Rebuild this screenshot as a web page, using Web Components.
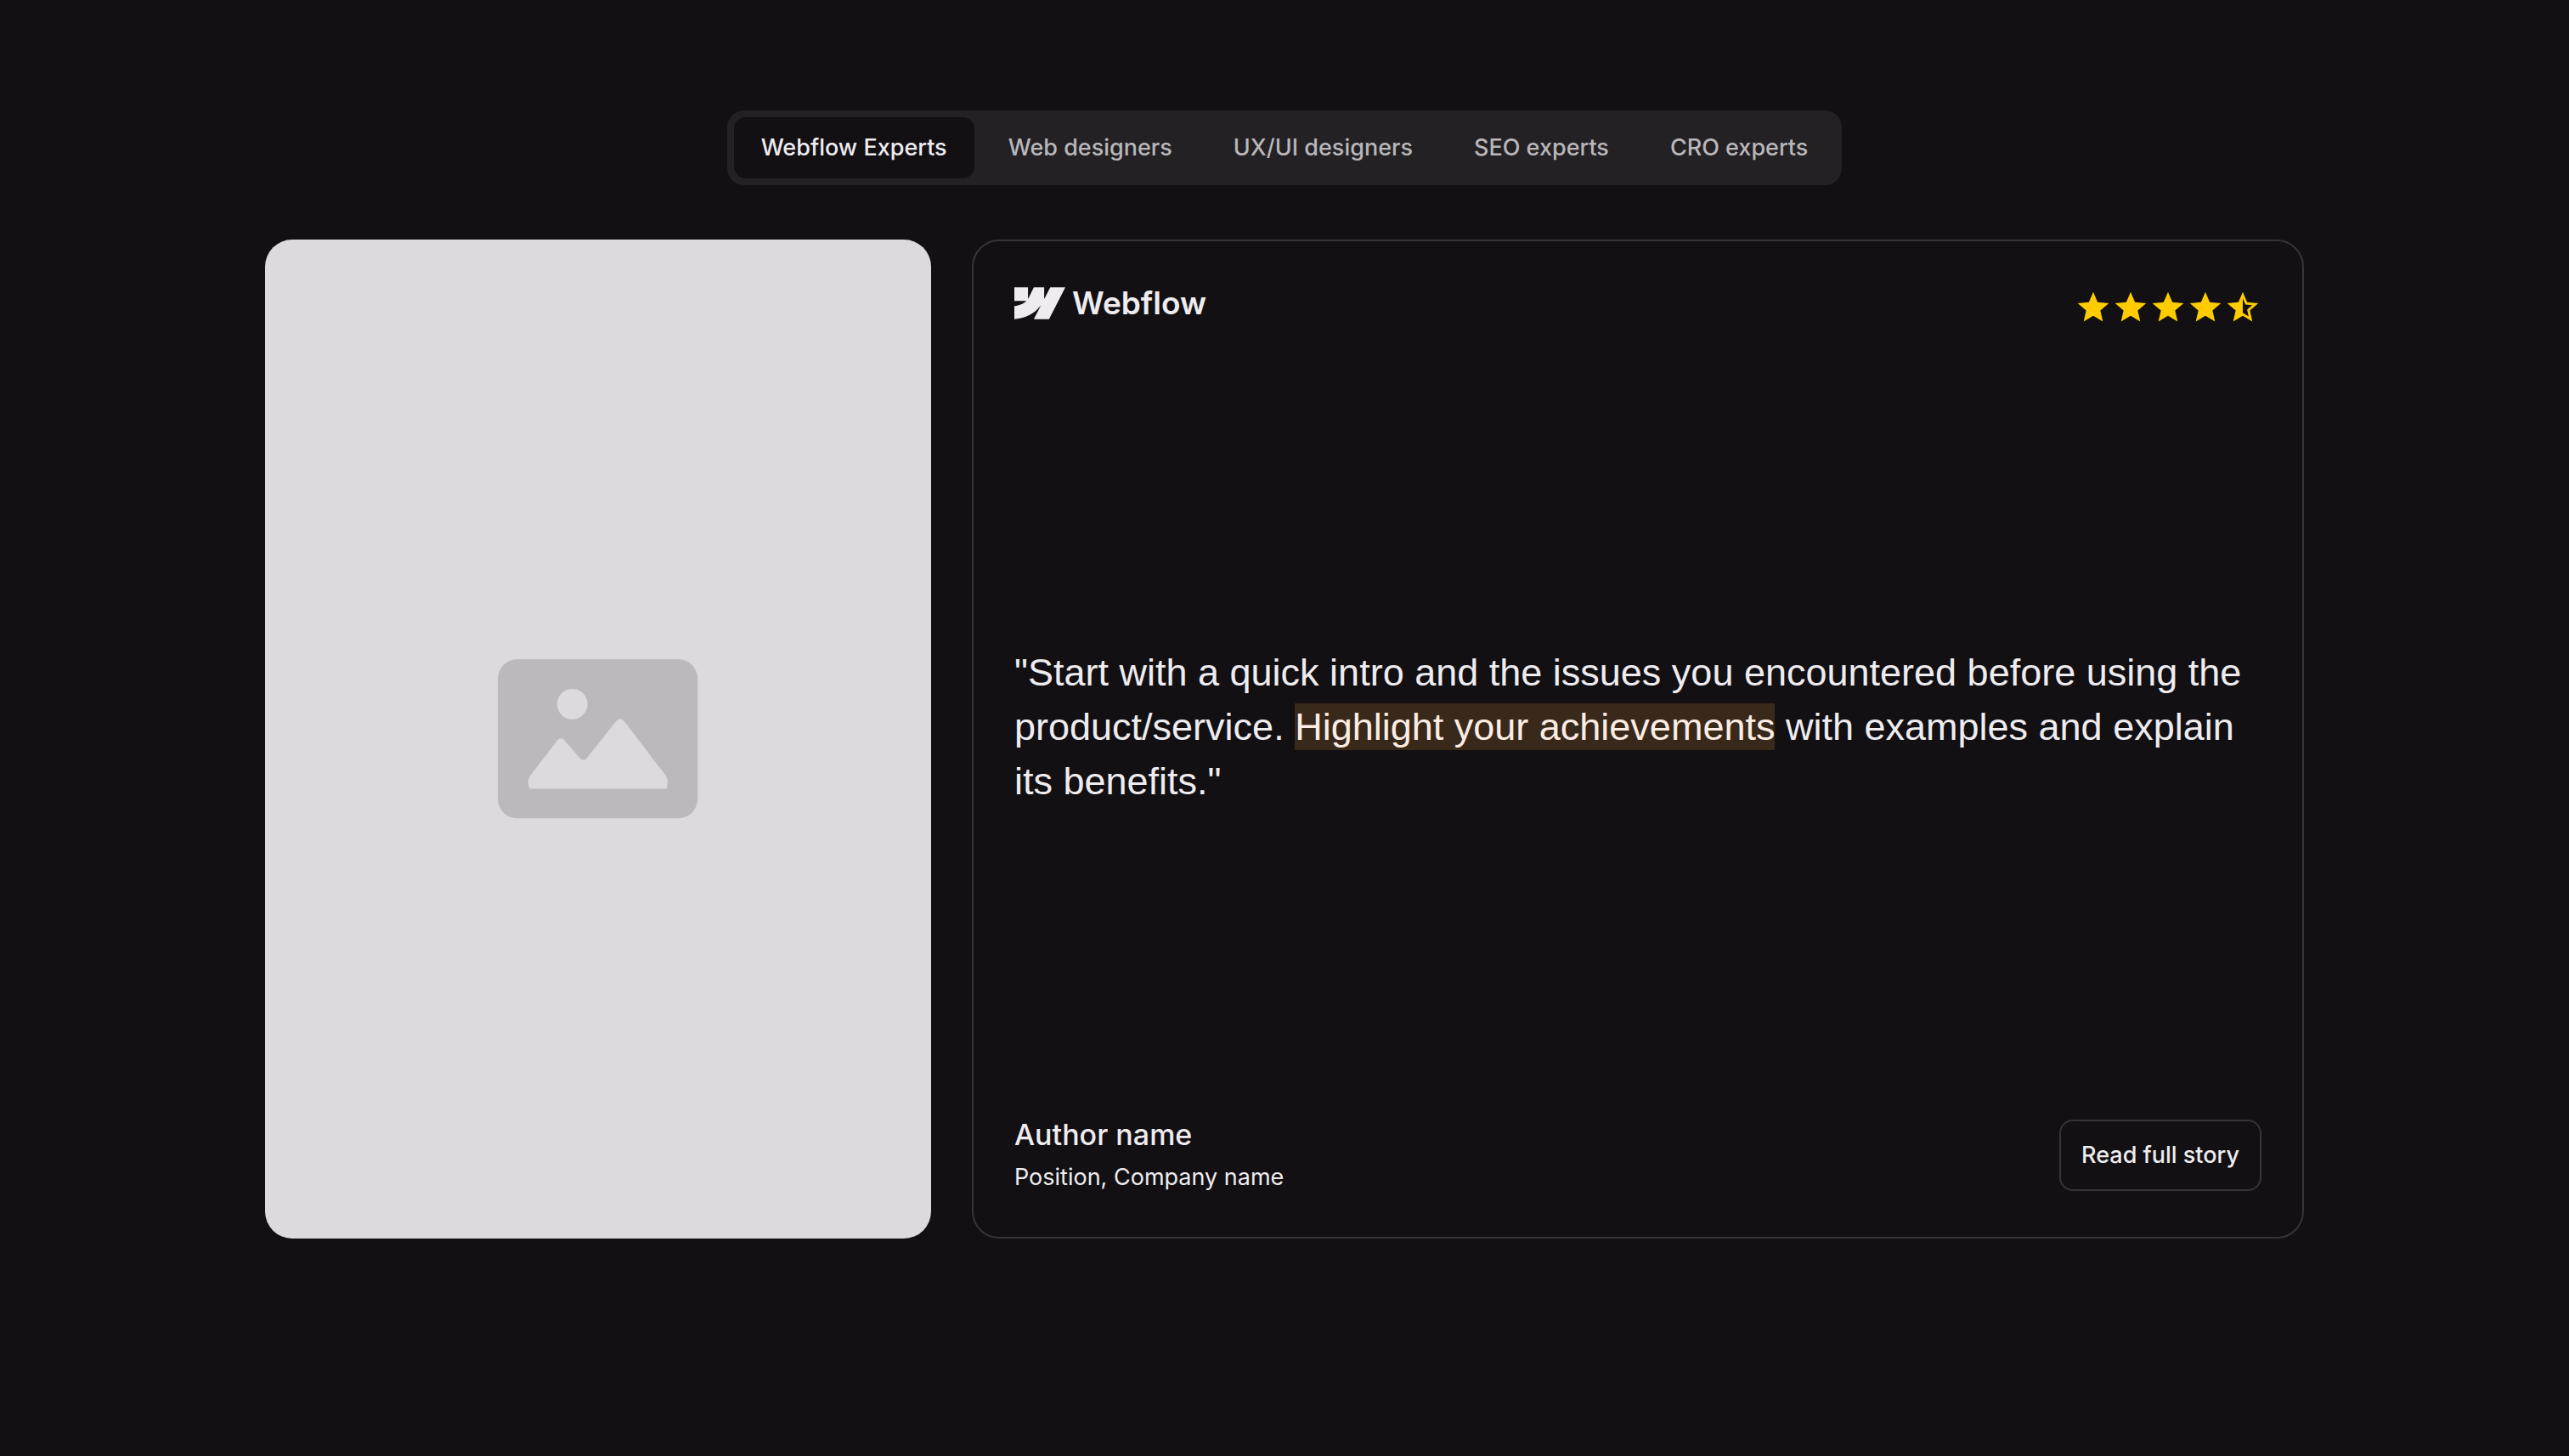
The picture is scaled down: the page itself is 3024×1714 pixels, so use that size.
<!DOCTYPE html>
<html lang="en">
<head>
<meta charset="utf-8">
<meta name="viewport" content="width=device-width, initial-scale=1">
<title>Testimonials</title>
<style>
  body {
    margin: 0;
    min-height: 100vh;
    background: #121013;
    color: #eeecef;
    font-family: Inter, "Liberation Sans", sans-serif;
  }
</style>
</head>
<body>

<testimonial-section>
  <tab-menu slot="tabs" label="Experts">
    <tab-item selected>Webflow Experts</tab-item>
    <tab-item>Web designers</tab-item>
    <tab-item>UX/UI designers</tab-item>
    <tab-item>SEO experts</tab-item>
    <tab-item>CRO experts</tab-item>
  </tab-menu>
  <image-placeholder></image-placeholder>
  <quote-card>
    <brand-logo slot="logo">Webflow</brand-logo>
    <star-rating slot="rating" value="4.5"></star-rating>
    "Start with a quick intro and the issues you encountered before using the product/service. <mark>Highlight your achievements</mark> with examples and explain its benefits."
    <span slot="author">Author name</span>
    <span slot="position">Position, Company name</span>
    <link-button slot="action" href="#story">Read full story</link-button>
  </quote-card>
</testimonial-section>

<script>
// small helper, every element clones its own template
function makeTemplate(html) {
  var template = document.createElement("template");
  template.innerHTML = html;
  return template;
}

// SECTION - tabs on top, picture and quote below
var template_section = makeTemplate(`
<style>
  :host {
    display: block;
    padding: 130px 72px;
  }
  .container {
    max-width: 2400px;
    margin: 0 auto;
  }
  .tabs {
    display: flex;
    justify-content: center;
    margin-bottom: 64px;
  }
  .grid {
    display: grid;
    grid-template-columns: 1fr 2fr;
    gap: 48px;
  }
</style>

<section class="container">
  <div class="tabs"><slot name="tabs"></slot></div>
  <div class="grid"><slot></slot></div>
</section>
`);

class TestimonialSection extends HTMLElement {
  constructor() {
    super();
    this.attachShadow({mode: "open"}).appendChild(template_section.content.cloneNode(true));
  }
}
customElements.define("testimonial-section", TestimonialSection);

// TAB MENU
var template_menu = makeTemplate(`
<style>
  :host {
    display: block;
  }
  .menu {
    display: flex;
    gap: 8px;
    padding: 8px;
    border-radius: 20px;
    background: #232124;
  }
</style>

<div class="menu" role="tablist"><slot></slot></div>
`);

class TabMenu extends HTMLElement {
  constructor() {
    super();
    this.attachShadow({mode: "open"}).appendChild(template_menu.content.cloneNode(true));
  }

  connectedCallback() {
    this.shadowRoot.querySelector(".menu").setAttribute("aria-label", this.getAttribute("label"));
    this.addEventListener("click", (event) => {
      var picked = event.target.closest("tab-item");
      if (!picked) return;
      this.querySelectorAll("tab-item").forEach((item) => {
        item.toggleAttribute("selected", item === picked);
      });
    });
  }
}
customElements.define("tab-menu", TabMenu);

var template_tab = makeTemplate(`
<style>
  :host {
    display: block;
  }
  button {
    display: block;
    height: 72px;
    padding: 0 32px;
    border: 0;
    border-radius: 14px;
    background: none;
    color: #b9b7ba;
    font: 500 27px/40px Inter, "Liberation Sans", sans-serif;
    white-space: nowrap;
    cursor: pointer;
  }
  :host([selected]) button {
    background: #121013;
    color: #eeecef;
  }
</style>

<button type="button" role="tab"><slot></slot></button>
`);

class TabItem extends HTMLElement {
  static get observedAttributes() {
    return ["selected"];
  }

  constructor() {
    super();
    this.attachShadow({mode: "open"}).appendChild(template_tab.content.cloneNode(true));
  }

  connectedCallback() {
    this.update();
  }

  attributeChangedCallback() {
    this.update();
  }

  update() {
    this.shadowRoot.querySelector("button").setAttribute("aria-selected", this.hasAttribute("selected"));
  }
}
customElements.define("tab-item", TabItem);

// IMAGE PLACEHOLDER
var template_image = makeTemplate(`
<style>
  :host {
    display: flex;
    align-items: center;
    justify-content: center;
    aspect-ratio: 2 / 3;
    border-radius: 32px;
    background: #dcdadd;
  }
  svg {
    width: 30%;
  }
</style>

<svg viewBox="0 0 236 188" aria-hidden="true">
  <rect width="236" height="188" rx="23" fill="#bbb9bc"/>
  <circle cx="88" cy="53" r="18" fill="#dcdadd"/>
  <path fill="#dcdadd" d="M39 153Q36 152 36 146Q35 142 38 138L71 95Q74 92 78 95L96 116Q101 122 105 117L140 73Q145 68 149 73L198 137Q202 142 200 149Q200 153 198 153Z"/>
</svg>
`);

class ImagePlaceholder extends HTMLElement {
  constructor() {
    super();
    this.attachShadow({mode: "open"}).appendChild(template_image.content.cloneNode(true));
  }
}
customElements.define("image-placeholder", ImagePlaceholder);

// QUOTE CARD
var template_card = makeTemplate(`
<style>
  :host {
    display: flex;
    flex-direction: column;
    justify-content: space-between;
    box-sizing: border-box;
    padding: 48px;
    border: 2px solid #363437;
    border-radius: 32px;
  }
  header,
  footer {
    display: flex;
    justify-content: space-between;
    gap: 32px;
  }
  header {
    align-items: flex-start;
    padding-bottom: 16px;
  }
  footer {
    align-items: center;
  }
  blockquote {
    margin: 0;
    font-family: "Liberation Sans", Arial, sans-serif;
    font-size: 45px;
    line-height: 64px;
  }
  ::slotted(mark) {
    padding: 2px 0;
    background: #39291b;
    color: #fcede4;
  }
  .person {
    display: grid;
    gap: 4px;
  }
  .author {
    font-size: 34px;
    font-weight: 500;
    line-height: 48px;
  }
  .position {
    font-size: 27px;
    line-height: 44px;
  }
</style>

<header>
  <slot name="logo"></slot>
  <slot name="rating"></slot>
</header>
<blockquote><slot></slot></blockquote>
<footer>
  <div class="person">
    <div class="author"><slot name="author"></slot></div>
    <div class="position"><slot name="position"></slot></div>
  </div>
  <slot name="action"></slot>
</footer>
`);

class QuoteCard extends HTMLElement {
  constructor() {
    super();
    this.attachShadow({mode: "open"}).appendChild(template_card.content.cloneNode(true));
  }
}
customElements.define("quote-card", QuoteCard);

// LOGO - mark plus the brand name
var template_logo = makeTemplate(`
<style>
  :host {
    display: flex;
    align-items: center;
    gap: 8px;
    font-size: 37px;
    font-weight: 600;
    line-height: 50px;
  }
  svg {
    width: 60px;
    height: 38px;
  }
</style>

<svg viewBox="0 0 1080 674" aria-hidden="true">
  <path fill="currentColor" d="M1080 0L735 674H412L556 394H549C430 549 253 651 0 674V398C0 398 162 389 257 289H0V0H289V238L295 237L413 0H632V236L638 236L761 0Z"/>
</svg>
<span><slot></slot></span>
`);

class BrandLogo extends HTMLElement {
  constructor() {
    super();
    this.attachShadow({mode: "open"}).appendChild(template_logo.content.cloneNode(true));
  }
}
customElements.define("brand-logo", BrandLogo);

// STARS
var star_full = "M12 17.27L18.18 21l-1.64-7.03L22 9.24l-7.19-.61L12 2 9.19 8.63 2 9.24l5.46 4.73L5.82 21z";
var star_half = "M22 9.24l-7.19-.62L12 2 9.19 8.63 2 9.24l5.46 4.73L5.82 21 12 17.27 18.18 21l-1.63-7.03L22 9.24zM12 15.4V6.1l1.71 4.04 4.38.38-3.32 2.88 1 4.28L12 15.4z";

var template_rating = makeTemplate(`
<style>
  :host {
    display: block;
    padding-top: 8px;
  }
  .stars {
    display: flex;
    color: #fc0;
  }
  svg {
    width: 44px;
    height: 44px;
    fill: currentColor;
  }
</style>

<div class="stars" role="img"></div>
`);

class StarRating extends HTMLElement {
  constructor() {
    super();
    this.attachShadow({mode: "open"}).appendChild(template_rating.content.cloneNode(true));
  }

  connectedCallback() {
    var value = Number(this.getAttribute("value"));
    var stars = this.shadowRoot.querySelector(".stars");
    var html = "";
    for (var i = 0; i < value; i++) {
      html += `<svg viewBox="0 0 24 24"><path d="${value - i >= 1 ? star_full : star_half}"/></svg>`;
    }
    stars.innerHTML = html;
    stars.setAttribute("aria-label", value + " / 5");
  }
}
customElements.define("star-rating", StarRating);

// BUTTON
var template_button = makeTemplate(`
<style>
  :host {
    display: block;
  }
  a {
    display: block;
    padding: 20px 24px;
    border: 2px solid #363437;
    border-radius: 16px;
    color: inherit;
    font-size: 27px;
    font-weight: 500;
    line-height: 40px;
    text-decoration: none;
    white-space: nowrap;
  }
</style>

<a><slot></slot></a>
`);

class LinkButton extends HTMLElement {
  constructor() {
    super();
    this.attachShadow({mode: "open"}).appendChild(template_button.content.cloneNode(true));
  }

  connectedCallback() {
    this.shadowRoot.querySelector("a").setAttribute("href", this.getAttribute("href"));
  }
}
customElements.define("link-button", LinkButton);
</script>
</body>
</html>
